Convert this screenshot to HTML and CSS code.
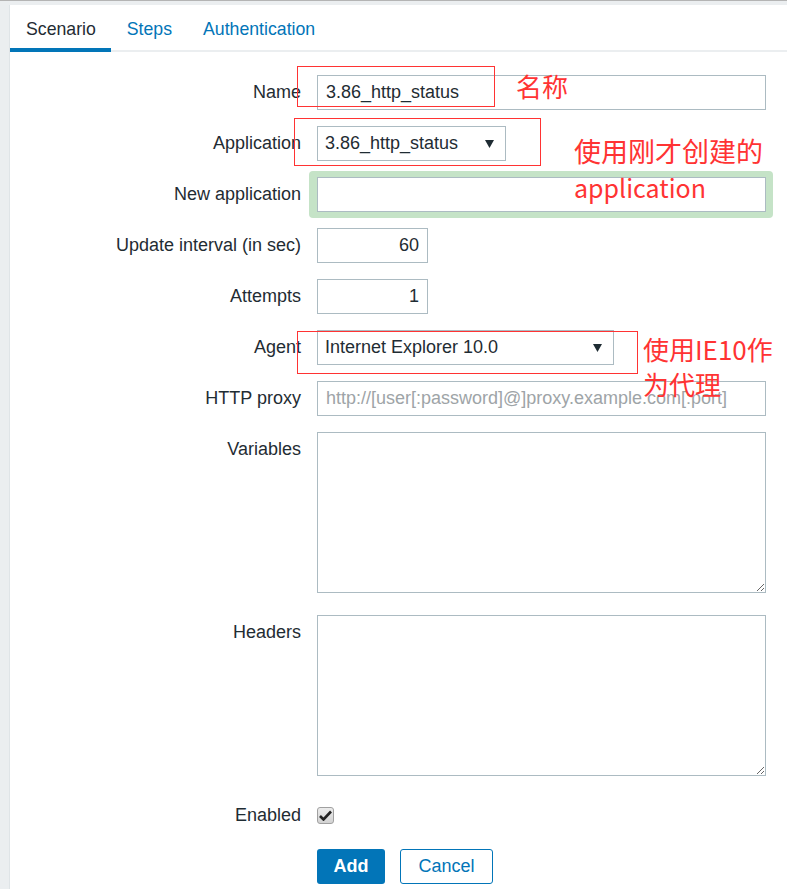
FILE: index.html
```html
<!DOCTYPE html>
<html lang="en">
<head>
    <meta charset="UTF-8">
    <meta name="viewport" content="width=device-width, initial-scale=1.0">
    <title>Web scenario</title>
    <link rel="stylesheet" href="styles.css">
</head>
<body>
    <div class="panel">
        <ul class="tabs">
            <li class="tab active">Scenario</li>
            <li class="tab">Steps</li>
            <li class="tab">Authentication</li>
        </ul>

        <form class="form">
            <div class="row">
                <label class="lbl" for="name">Name</label>
                <div class="field">
                    <input class="text wide" id="name" type="text" value="3.86_http_status">
                    <!-- annotation -->
                    <span class="mark mark-name"></span>
                    <span class="note note-name">名称</span>
                </div>
            </div>

            <div class="row">
                <label class="lbl">Application</label>
                <div class="field">
                    <div class="select select-app">
                        <span>3.86_http_status</span>
                        <svg class="arrow" width="9" height="8" viewBox="0 0 9 8"><path d="M0 0H9L4.5 8Z"/></svg>
                    </div>
                    <span class="mark mark-app"></span>
                    <span class="note note-app">使用刚才创建的<br><span class="latin">application</span></span>
                </div>
            </div>

            <div class="row">
                <label class="lbl" for="new-app">New application</label>
                <div class="field">
                    <span class="glow"></span>
                    <input class="text wide" id="new-app" type="text">
                </div>
            </div>

            <div class="row">
                <label class="lbl" for="delay">Update interval (in sec)</label>
                <div class="field">
                    <input class="text num" id="delay" type="text" value="60">
                </div>
            </div>

            <div class="row">
                <label class="lbl" for="retries">Attempts</label>
                <div class="field">
                    <input class="text num" id="retries" type="text" value="1">
                </div>
            </div>

            <div class="row">
                <label class="lbl">Agent</label>
                <div class="field">
                    <div class="select select-agent">
                        <span>Internet Explorer 10.0</span>
                        <svg class="arrow" width="9" height="8" viewBox="0 0 9 8"><path d="M0 0H9L4.5 8Z"/></svg>
                    </div>
                    <span class="mark mark-agent"></span>
                    <span class="note note-agent">使用IE10作<br>为代理</span>
                </div>
            </div>

            <div class="row">
                <label class="lbl" for="proxy">HTTP proxy</label>
                <div class="field">
                    <input class="text wide" id="proxy" type="text" placeholder="http://[user[:password]@]proxy.example.com[:port]">
                </div>
            </div>

            <div class="row">
                <label class="lbl" for="variables">Variables</label>
                <div class="field">
                    <textarea class="area" id="variables"></textarea>
                </div>
            </div>

            <div class="row">
                <label class="lbl" for="headers">Headers</label>
                <div class="field">
                    <textarea class="area" id="headers"></textarea>
                </div>
            </div>

            <div class="row">
                <label class="lbl">Enabled</label>
                <div class="field check-field">
                    <span class="check">
                        <svg width="13" height="11" viewBox="0 0 13 11"><path d="M1 6L4.5 9.5L12 1.5" fill="none" stroke="#222" stroke-width="2.6"/></svg>
                    </span>
                </div>
            </div>

            <div class="row">
                <span></span>
                <div class="field buttons">
                    <button type="button" class="btn btn-add">Add</button>
                    <button type="button" class="btn btn-cancel">Cancel</button>
                </div>
            </div>
        </form>
    </div>
</body>
</html>
```

FILE: styles.css
```css
body {
    margin: 0;
    background: #ebeef0;
    border-top: 1px solid #b4b4b4;
    font-family: "Liberation Sans", Arial, sans-serif;
    font-size: 18px;
    color: #1f2c33;
    overflow: hidden;
}
.panel {
    margin: 4px 0 0 9px;
    height: 884px;
    background: #fff;
    border-left: 1px solid #dfe4e7;
}

/* tabs */
.tabs {
    display: flex;
    height: 45px;
    margin: 0;
    padding: 0;
    list-style: none;
    border-bottom: 2px solid #ebeef0;
}
.tab {
    height: 47px;
    box-sizing: border-box;
    padding: 2px 15px 0 16px;
    line-height: 45px;
    font-size: 17.7px;
    color: #0275b8;
}
.tab.active {
    color: #1f2c33;
    border-bottom: 4px solid #0275b8;
}

/* form */
.form {
    display: flex;
    flex-direction: column;
    gap: 16px;
    padding-top: 23px;
}
.row {
    display: grid;
    grid-template-columns: 291px 1fr;
    column-gap: 16px;
}
.lbl {
    text-align: right;
    line-height: 35px;
}
.field {
    position: relative;
    min-height: 35px;
}
.text {
    display: block;
    height: 35px;
    box-sizing: border-box;
    padding: 0 8px;
    border: 1px solid #acbbc2;
    font-family: inherit;
    font-size: 18px;
    color: #1f2c33;
    background: #fff;
    outline: none;
}
.text::placeholder {
    color: #9ea4a7;
}
.wide {
    width: 449px;
}
.num {
    width: 111px;
    text-align: right;
}
.select {
    display: flex;
    align-items: center;
    justify-content: space-between;
    height: 35px;
    box-sizing: border-box;
    padding: 0 11px 0 7px;
    border: 1px solid #acbbc2;
}
.select-app {
    width: 189px;
}
.select-agent {
    width: 297px;
}
.arrow {
    fill: #1f2c33;
}
.area {
    display: block;
    width: 449px;
    height: 161px;
    box-sizing: border-box;
    margin-bottom: 6px;
    border: 1px solid #acbbc2;
    font-family: inherit;
    font-size: 18px;
    outline: none;
}
.check-field {
    display: flex;
    align-items: center;
}
.check {
    display: flex;
    align-items: center;
    justify-content: center;
    width: 17px;
    height: 17px;
    box-sizing: border-box;
    border: 1px solid #a0a0a0;
    border-radius: 3px;
    background: linear-gradient(#ececec, #d2d2d2);
}
.buttons {
    display: flex;
    gap: 15px;
}
.btn {
    height: 35px;
    border-radius: 3px;
    font-family: inherit;
    font-size: 18px;
    cursor: pointer;
}
.btn-add {
    width: 68px;
    border: none;
    background: #0275b8;
    color: #fff;
    font-weight: bold;
}
.btn-cancel {
    width: 93px;
    border: 1px solid #0275b8;
    background: #fff;
    color: #0275b8;
}

/* annotations drawn on the screenshot */
.glow {
    position: absolute;
    top: -6px;
    bottom: -6px;
    left: -8px;
    width: 464px;
    background: #c5e3c7;
    border-radius: 4px;
}
.glow + .text {
    position: relative;
}
.mark {
    position: absolute;
    border: 1px solid #f33;
    box-sizing: border-box;
    pointer-events: none;
}
.mark-name {
    left: -20px;
    top: -9px;
    width: 198px;
    height: 41px;
}
.mark-app {
    left: -23px;
    top: -8px;
    width: 247px;
    height: 48px;
}
.mark-agent {
    left: -20px;
    top: 1px;
    width: 341px;
    height: 43px;
}
.note {
    position: absolute;
    z-index: 2;
    color: #f33;
    font-family: "Noto Sans CJK SC", sans-serif;
    white-space: nowrap;
}
.note-name {
    left: 199px;
    top: -7px;
    font-size: 26px;
    line-height: 35px;
}
.note-app {
    left: 257px;
    top: 7px;
    font-size: 27px;
    line-height: 36px;
}
.note-app .latin {
    font-size: 25px;
}
.note-agent {
    left: 326px;
    top: 1px;
    font-size: 26px;
    line-height: 35px;
}
```
